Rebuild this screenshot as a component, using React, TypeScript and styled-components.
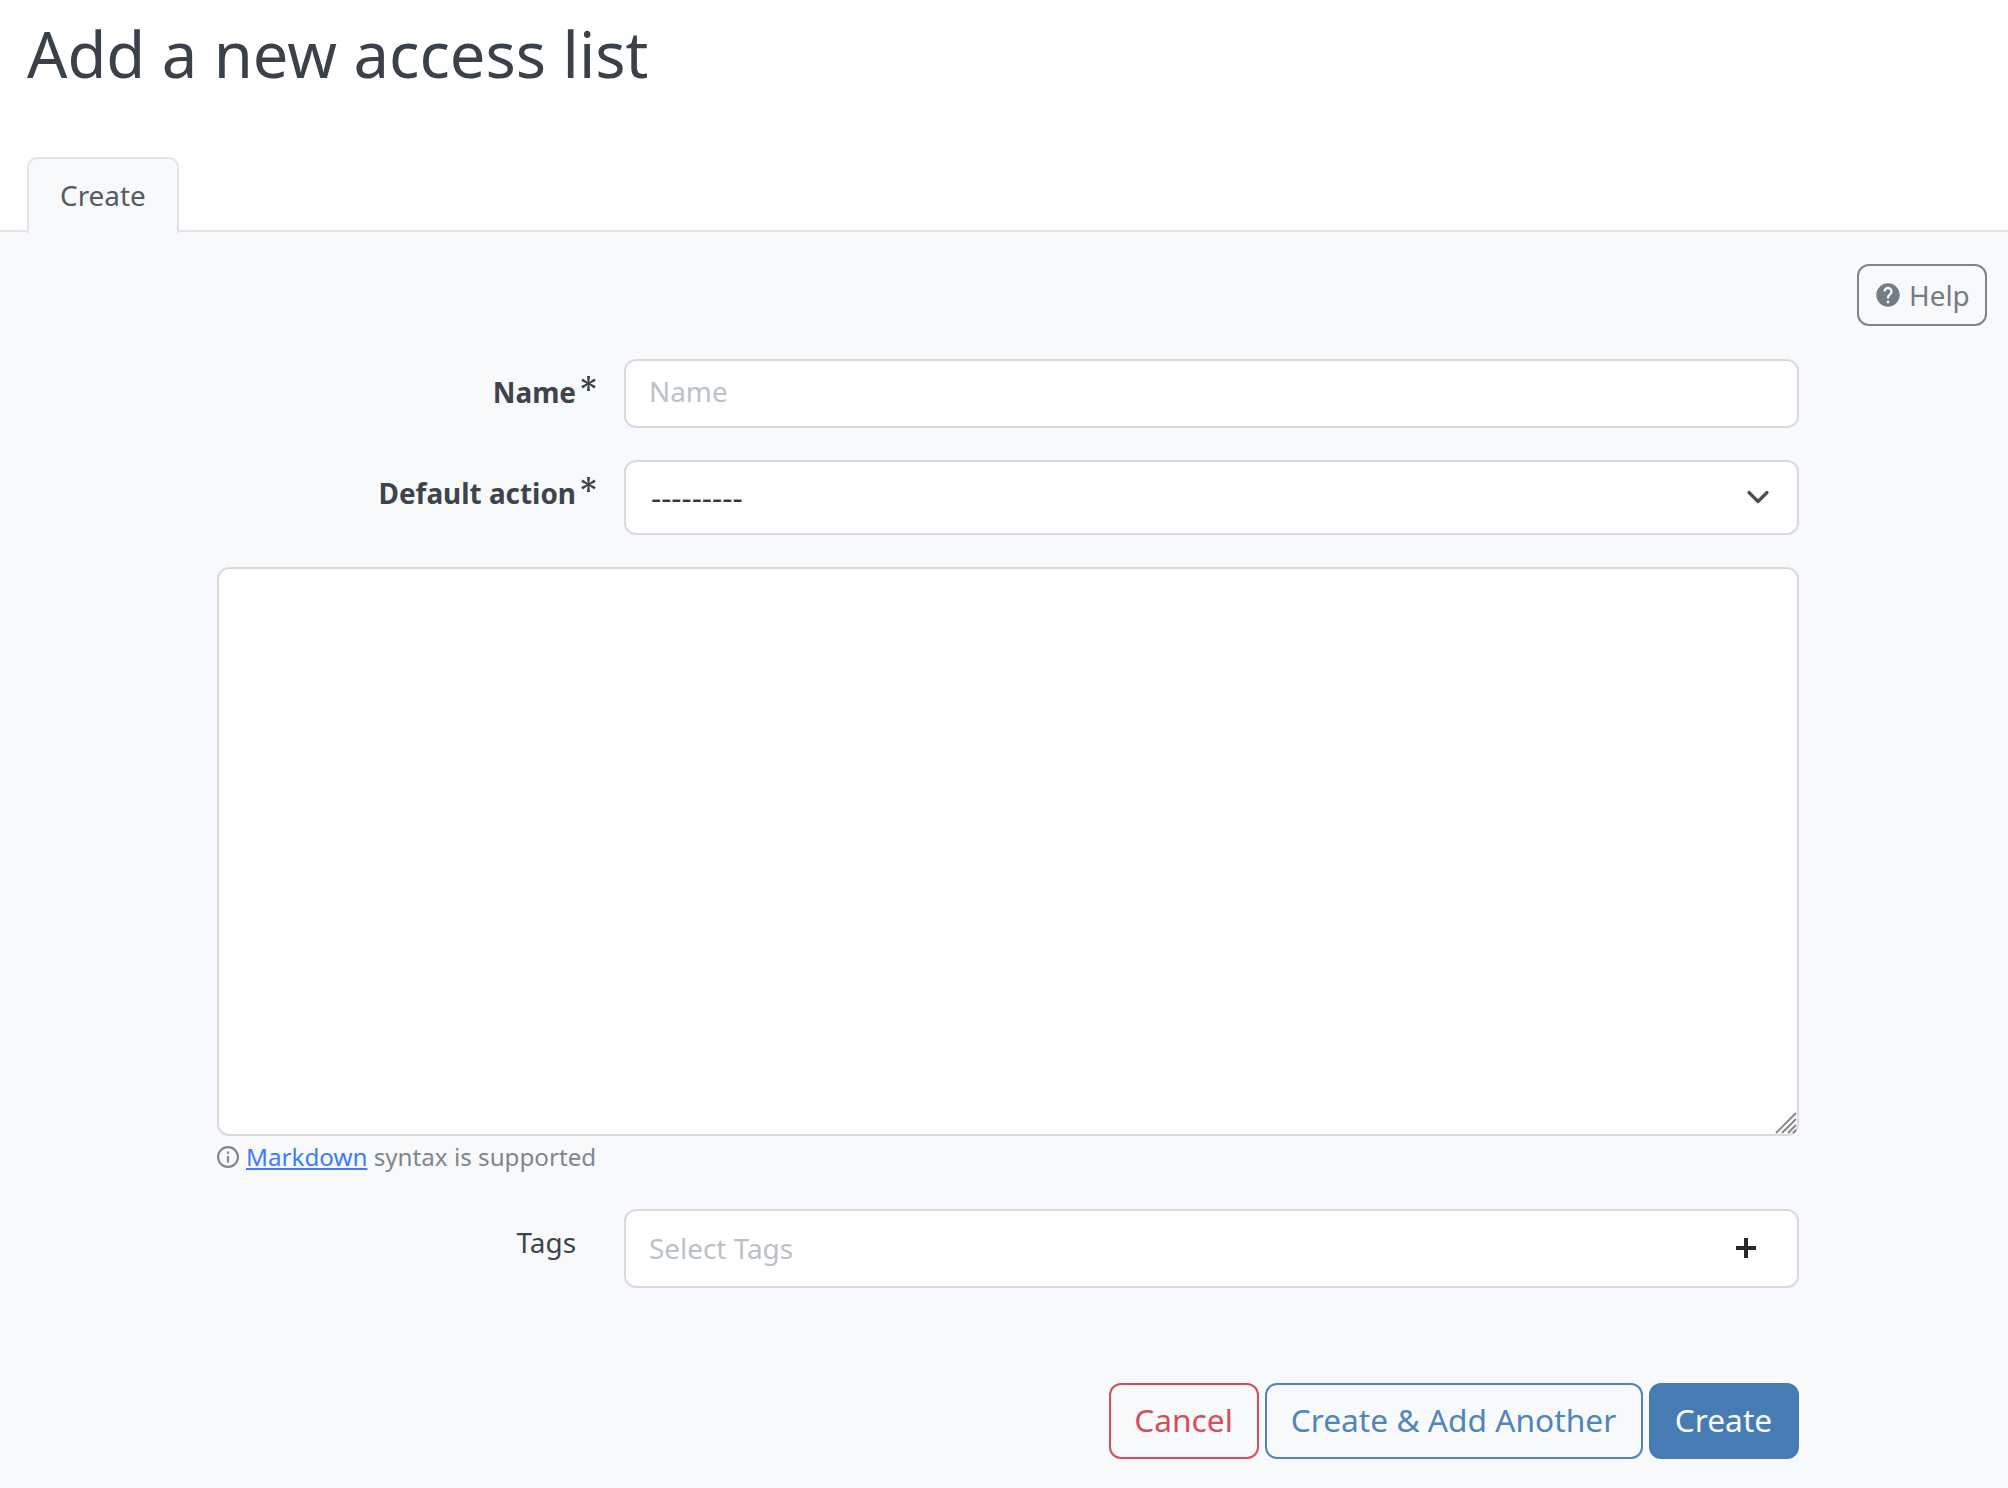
import React from "react";
import styled, { createGlobalStyle, css } from "styled-components";

const GlobalStyle = createGlobalStyle`
  *, *::before, *::after { box-sizing: border-box; }
  body {
    margin: 0;
    background: #f8f9fb;
    color: #3e444b;
    font-family: "Noto Sans", sans-serif;
    font-size: 27.9px;
    line-height: 40px;
  }
  input, textarea, button { font: inherit; color: inherit; margin: 0; }
`;

const Page = styled.div`
  display: flex;
  flex-direction: column;
  min-height: 1488px;
`;

const Header = styled.header`
  display: flex;
  flex-direction: column;
  justify-content: space-between;
  height: 232px;
  background: #fff;
  border-bottom: 2px solid #e1e4e8;
`;

const Title = styled.h1`
  margin: 0;
  padding: 10px 27px 0;
  font-size: 63.3px;
  font-weight: 400;
  line-height: 88px;
  color: #3a4148;
`;

const Tabs = styled.nav`
  display: flex;
  padding-left: 27px;
  margin-bottom: -3px;
`;

const Tab = styled.a`
  height: 76px;
  width: 152px;
  padding: 16px 0 0 31px;
  border: 2px solid #e1e4e8;
  border-bottom: 0;
  border-radius: 10px 10px 0 0;
  background: #f8f9fb;
  color: #545b64;
`;

const Toolbar = styled.div`
  display: flex;
  justify-content: flex-end;
  padding: 32px 21px 33px 0;
`;

const HelpButton = styled.button`
  display: flex;
  align-items: center;
  gap: 7px;
  width: 130px;
  height: 62px;
  padding: 0 0 1px 15px;
  border: 2px solid #7d848b;
  border-radius: 12px;
  background: transparent;
  color: #747c84;
`;

const Form = styled.form`
  display: flex;
  flex-direction: column;
  width: 1582px;
  margin-left: 217px;
`;

const Row = styled.div<{ $gap: number }>`
  display: flex;
  margin-bottom: ${(p) => p.$gap}px;
`;

const Label = styled.label<{ $required?: boolean }>`
  display: flex;
  width: 407px;
  padding: 13px 0 0;
  justify-content: flex-end;
  padding-right: ${(p) => (p.$required ? 28 : 48)}px;
  font-weight: ${(p) => (p.$required ? 700 : 400)};
`;

const RequiredIcon = styled.svg`
  width: 15px;
  height: 15px;
  margin: 4px 0 0 5px;
`;

const Required = () => (
  <RequiredIcon viewBox="2 2 20 20" fill="currentColor">
    <path d="M10 2H14L13.21 9.91L19.66 5.27L21.66 8.73L14.42 12L21.66 15.27L19.66 18.73L13.21 14.09L14 22H10L10.79 14.09L4.34 18.73L2.34 15.27L9.58 12L2.34 8.73L4.34 5.27L10.79 9.91L10 2Z" />
  </RequiredIcon>
);

const field = css`
  border: 2px solid #d7dbe1;
  border-radius: 12px;
  background: #fff;
`;

const TextInput = styled.input`
  ${field}
  flex: 1;
  height: 69px;
  padding: 0 23px 5px;
  outline: 0;
  &::placeholder { color: #bbc1c8; opacity: 1; }
`;

const SelectBox = styled.div<{ $height: number; $end: number; $placeholder?: boolean }>`
  ${field}
  display: flex;
  flex: 1;
  align-items: center;
  justify-content: space-between;
  height: ${(p) => p.$height}px;
  padding: 0 ${(p) => p.$end}px 1px ${(p) => (p.$placeholder ? 23 : 25)}px;
  font-size: ${(p) => (p.$placeholder ? 27.9 : 31.6)}px;
  color: ${(p) => (p.$placeholder ? "#bbc1c8" : "#32383e")};
`;

const Comments = styled.div`
  position: relative;
  height: 569px;
`;

const TextArea = styled.textarea`
  ${field}
  display: block;
  width: 100%;
  height: 100%;
  outline: 0;
  resize: none;
`;

const Grip = styled.svg`
  position: absolute;
  right: 2px;
  bottom: 2px;
`;

const Hint = styled.div`
  display: flex;
  align-items: center;
  height: 40px;
  margin: 1px 0 32px;
  font-size: 24.2px;
  color: #7f868e;
  white-space: pre;
`;

const InfoIcon = styled.svg`
  margin-right: 7px;
`;

const Link = styled.a`
  color: #3b7cff;
  text-decoration: underline;
`;

const Actions = styled.div`
  display: flex;
  justify-content: flex-end;
  gap: 6px;
  padding-top: 95px;
`;

const ActionButton = styled.button<{ $color: string; $width: number; $solid?: boolean }>`
  width: ${(p) => p.$width}px;
  height: 76px;
  padding: 0 1px 2px 0;
  border: 2px solid ${(p) => p.$color};
  border-radius: 12px;
  background: ${(p) => (p.$solid ? p.$color : "transparent")};
  color: ${(p) => (p.$solid ? "#f8f9fb" : p.$color)};
  font-size: 31.7px;
`;

export default function App() {
  return (
    <>
      <GlobalStyle />
      <Page>
        <Header>
          <Title>Add a new access list</Title>
          <Tabs>
            <Tab>Create</Tab>
          </Tabs>
        </Header>
        <Toolbar>
          <HelpButton type="button">
            <svg width="28" height="28" viewBox="0 0 24 24" fill="currentColor">
              <path d="M15.07 11.25l-.9.92C13.45 12.89 13 13.5 13 15h-2v-.5c0-1.11.45-2.11 1.17-2.83l1.24-1.26c.37-.36.59-.86.59-1.41a2 2 0 0 0-4 0H8a4 4 0 0 1 8 0c0 .88-.36 1.67-.93 2.25M13 19h-2v-2h2M12 2a10 10 0 1 0 0 20 10 10 0 0 0 0-20" />
            </svg>
            Help
          </HelpButton>
        </Toolbar>
        <Form>
          <Row $gap={32}>
            <Label $required>
              Name
              <Required />
            </Label>
            <TextInput placeholder="Name" />
          </Row>
          <Row $gap={32}>
            <Label $required>
              Default action
              <Required />
            </Label>
            <SelectBox $height={75} $end={27}>
              ---------
              <svg width="24" height="24" viewBox="0 0 24 24" fill="none" stroke="#484f57" strokeWidth="3.2" strokeLinecap="round" strokeLinejoin="round">
                <path d="M3 7.5l9 9 9-9" />
              </svg>
            </SelectBox>
          </Row>
          <Comments>
            <TextArea />
            <Grip width="22" height="22" viewBox="0 0 22 22" stroke="#858585" strokeWidth="1.9">
              <path d="M1 21L21 1M7 21L21 7M13 21L21 13M18 21l3-3" />
            </Grip>
          </Comments>
          <Hint>
            <InfoIcon width="22" height="22" viewBox="2 2 20 20" fill="currentColor">
              <path d="M11 9h2V7h-2m1 13c-4.41 0-8-3.59-8-8s3.59-8 8-8 8 3.59 8 8-3.59 8-8 8m0-18A10 10 0 0 0 2 12a10 10 0 0 0 10 10 10 10 0 0 0 10-10A10 10 0 0 0 12 2m-1 15h2v-6h-2v6z" />
            </InfoIcon>
            <Link>Markdown</Link> syntax is supported
          </Hint>
          <Row $gap={0}>
            <Label>Tags</Label>
            <SelectBox $height={79} $end={40} $placeholder>
              Select Tags
              <svg width="22" height="22" viewBox="0 0 22 22" fill="none" stroke="#252a31" strokeWidth="4">
                <path d="M1 11h20M11 1v20" />
              </svg>
            </SelectBox>
          </Row>
          <Actions>
            <ActionButton type="button" $color="#d35059" $width={150}>Cancel</ActionButton>
            <ActionButton type="button" $color="#4f85bb" $width={378}>Create &amp; Add Another</ActionButton>
            <ActionButton type="button" $color="#467bb4" $width={150} $solid>Create</ActionButton>
          </Actions>
        </Form>
      </Page>
    </>
  );
}
